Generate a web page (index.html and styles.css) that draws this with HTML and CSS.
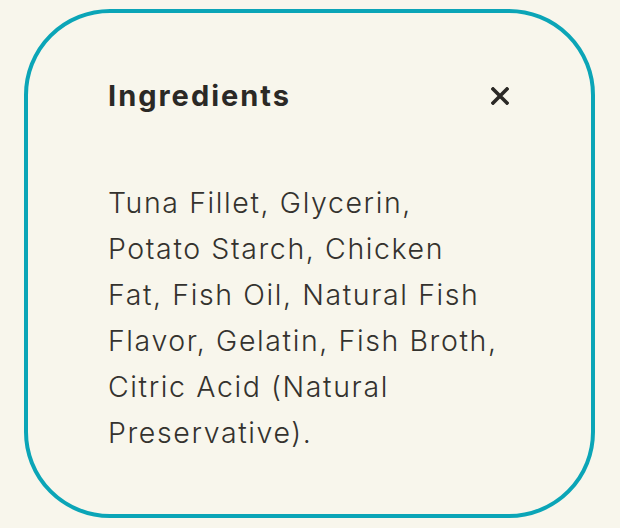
FILE: index.html
```html
<!DOCTYPE html>
<html lang="en">
<head>
<meta charset="utf-8">
<title>Ingredients</title>
<link rel="stylesheet" href="styles.css">
</head>
<body>
<div class="page">
  <section class="card">
    <header class="card-head">
      <h2 class="title">Ingredients</h2>
      <button class="close" aria-label="Close">
        <svg viewBox="0 0 18 18" width="18" height="18"><path d="M2 2 L16 16 M16 2 L2 16" stroke="#2b2926" stroke-width="3.6" stroke-linecap="square" fill="none"/></svg>
      </button>
    </header>
    <p class="body">Tuna Fillet, Glycerin,<br>Potato Starch, Chicken<br>Fat, Fish Oil, Natural Fish<br>Flavor, Gelatin, Fish Broth,<br>Citric Acid (Natural<br>Preservative).</p>
  </section>
</div>
</body>
</html>
```
FILE: styles.css
```css
html, body {
  margin: 0;
  padding: 0;
  background: #f8f6ec;
}
.page {
  width: 620px;
  height: 528px;
  padding: 9px 25px 10px 24px;
  box-sizing: border-box;
}
.card {
  box-sizing: border-box;
  height: 509px;
  border: 4px solid #0ba5b7;
  border-radius: 86px;
  padding: 65px 80px 0 80px;
  font-family: "Inter", sans-serif;
  color: #2b2926;
}
.card-head {
  display: flex;
  justify-content: space-between;
  align-items: center;
  height: 36px;
}
.title {
  margin: 0;
  font-size: 29px;
  font-weight: 700;
  line-height: 36px;
  letter-spacing: 2px;
}
.close {
  border: 0;
  background: none;
  padding: 0;
  width: 18px;
  height: 18px;
  margin-right: 2px;
  display: flex;
}
.body {
  margin: 66px 0 0 0;
  font-size: 28.5px;
  font-weight: 300;
  line-height: 46px;
  letter-spacing: 1.6px;
  color: #34322e;
  white-space: nowrap;
}
```
